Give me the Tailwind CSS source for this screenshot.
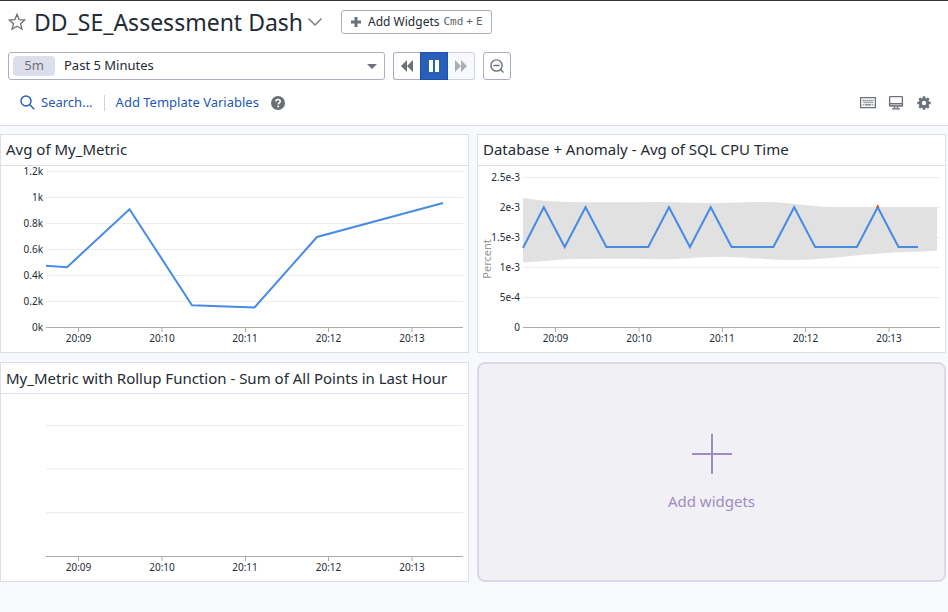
<!DOCTYPE html>
<html lang="en">
<head>
<meta charset="utf-8">
<meta name="viewport" content="width=device-width, initial-scale=1">
<title>DD_SE_Assessment Dash</title>
<script src="https://cdn.jsdelivr.net/npm/@tailwindcss/browser@4"></script>
</head>
<body class="min-h-screen bg-[#f8f9fc] font-['Noto_Sans','Open_Sans',sans-serif] text-[#232b35]">
<header class="border-t border-b border-t-[#333] border-b-[#dcdfea] bg-white">
  <div class="flex h-[42px] items-center px-2">
    <button aria-label="Favorite dashboard" class="text-[#6b7178]">
      <svg class="size-[18px]" viewBox="0 0 18 18" fill="none" stroke="currentColor" stroke-width="1.3" stroke-linejoin="miter"><path d="M9 1.3 11.1 6.6 16.8 7 12.5 10.7 13.9 16.2 9 13.2 4.1 16.2 5.5 10.7 1.2 7 6.9 6.6Z"/></svg>
    </button>
    <h1 class="ml-2 text-[23px] leading-8">DD_SE_Assessment Dash</h1>
    <button aria-label="Dashboard menu" class="ml-1 text-[#7b8087]">
      <svg class="h-4 w-4" viewBox="0 0 16 16" fill="none" stroke="currentColor" stroke-width="1.5"><path d="M1.5 4.5 8 11 14.500 4.500"/></svg>
    </button>
    <button class="ml-[18px] flex h-6 items-center rounded-[3px] border border-[#a9afc0] px-2 text-xs">
      <svg class="mr-1.5 size-3 text-[#6b7178]" viewBox="0 0 12 12" fill="none" stroke="currentColor" stroke-width="3"><path d="M6 1v10M1 6h10"/></svg>
      Add Widgets
      <kbd class="ml-1 flex gap-[3px] font-['DejaVu_Sans_Mono',monospace] text-[11px] text-[#5b636e]"><span>Cmd</span> <span>+</span> <span>E</span></kbd>
    </button>
  </div>
  <div class="flex items-center gap-2 px-2 pt-[9px]">
    <div class="relative w-[377px]">
      <select aria-label="Time range" class="block h-7 w-full appearance-none rounded-[3px] border border-[#a9afc0] bg-white pr-7 pl-[55px] text-[13px] text-[#232b35]"><option>Past 5 Minutes</option></select>
      <span class="pointer-events-none absolute top-1 left-[5px] flex h-5 w-[42px] items-center justify-center rounded bg-[#dcdfe9] text-[13px] text-[#6b7178]">5m</span>
      <svg class="pointer-events-none absolute top-3 right-2 h-[5px] w-[10px] text-[#6b7178]" viewBox="0 0 10 5" fill="currentColor"><path d="M0 0h10L5 5Z"/></svg>
    </div>
    <div class="flex h-7 w-[82px]">
      <button aria-label="Rewind" class="flex w-[27px] items-center justify-center rounded-l-[3px] border border-r-0 border-[#a9afc0] text-[#6b7178]">
        <svg class="h-3 w-3" viewBox="0 0 12 12" fill="currentColor"><path d="M6 0v12L0 6ZM12 0v12L6 6Z"/></svg>
      </button>
      <button aria-label="Pause" class="flex w-7 items-center justify-center border border-[#1e4fae] bg-[#2860b8] text-white">
        <svg class="h-3 w-3" viewBox="0 0 12 12" fill="currentColor"><path d="M1 0h4v12H1ZM7 0h4v12H7Z"/></svg>
      </button>
      <button aria-label="Fast forward" disabled class="flex w-[27px] items-center justify-center rounded-r-[3px] border border-l-0 border-[#d0d3de] bg-[#f8f9fc] text-[#abaeb3]">
        <svg class="h-3 w-3" viewBox="0 0 12 12" fill="currentColor"><path d="M0 0v12L6 6ZM6 0v12l6-6Z"/></svg>
      </button>
    </div>
    <button aria-label="Zoom out" class="flex size-7 items-center justify-center rounded-[3px] border border-[#a9afc0] text-[#6b7178]">
      <svg class="size-4" viewBox="0 0 16 16" fill="none" stroke="currentColor" stroke-width="1.4"><circle cx="7.500" cy="7.500" r="5.600"/><path d="M4.500 7.500h6M11.500 11.500l3 3"/></svg>
    </button>
  </div>
  <div class="flex h-[45px] items-center pr-4 pl-5 text-[13px] text-[#2459b8]">
    <button class="flex items-center gap-1.5">
      <svg class="size-[15px]" viewBox="0 0 15 15" fill="none" stroke="currentColor" stroke-width="1.4"><circle cx="6" cy="6" r="5"/><path d="m9.600 9.600 4.600 4.600"/></svg>
      Search...
    </button>
    <span class="mx-[11px] h-4 w-px bg-[#ced2de]"></span>
    <a href="#variables">Add Template Variables</a>
    <button aria-label="Help" class="ml-3 text-[#6b6e73]">
      <svg class="size-[14px]" viewBox="0 0 14 14"><circle cx="7" cy="7" r="7" fill="currentColor"/><path d="M4.900 5.500C4.900 2.700 9.200 2.800 9.200 5.400 9.200 6.900 7.200 6.900 7.200 8.500" fill="none" stroke="#fff" stroke-width="1.600"/><circle cx="7.200" cy="10.500" r="1" fill="#fff"/></svg>
    </button>
    <div class="ml-auto flex items-center gap-3 text-[#6b7178]">
      <button aria-label="Keyboard shortcuts"><svg class="size-4" viewBox="0 0 16 16" fill="none" stroke="currentColor"><path d="M.6 2.600h14.800v10H.6Z" stroke-width="1.300"/><path d="M2.500 5.500h11M3.500 7.500h10" stroke-width="1.300" stroke-dasharray="1.200 .8"/><path d="M2.500 9.800h1.200M4.700 9.800h6.600M12.300 9.800h1.200" stroke-width="1.300"/></svg></button>
      <button aria-label="TV mode"><svg class="size-4" viewBox="0 0 16 16" fill="none" stroke="currentColor" stroke-width="1.300"><path d="M2 9h12v2H2Z" fill="#d5d7da" stroke="none"/><rect x="1.600" y="1.600" width="12.800" height="9.400" rx=".6"/><path d="M2 8.600h12M6.500 11.500v2M9.500 11.500v2M4 13.900h8"/></svg></button>
      <button aria-label="Settings"><svg class="size-4" viewBox="0 0 16 16"><circle cx="8" cy="8" r="3.700" fill="none" stroke="currentColor" stroke-width="3"/><path d="M8 1.300v2.500M8 12.200v2.500M1.300 8h2.500M12.200 8h2.500M3.260 3.260l1.800 1.800M10.940 10.940l1.800 1.800M3.260 12.740l1.800-1.800M10.940 5.060l1.800-1.800" stroke="currentColor" stroke-width="2.600"/></svg></button>
    </div>
  </div>
</header>
<main class="grid grid-cols-2 gap-x-2 gap-y-[9px] pt-2 pr-[2px]">
  <section class="border border-[#dcdfea] bg-white">
    <h2 class="flex h-[31px] items-center border-b border-[#dcdfea] px-[5px] pb-px text-[15px]">Avg of My_Metric</h2>
    <svg class="block h-auto w-full overflow-visible" viewBox="0 0 467 186" role="img" aria-label="Average of My_Metric over time">
      <path d="M45 5.500H462M45 31.500H462M45 57.500H462M45 83.500H462M45 109.500H462M45 135.500H462" stroke="#ebebeb"/>
      <path d="M45 161.500H462M77.500 161v5M161 161v5M244.500 161v5M327.500 161v5M411 161v5" stroke="#a9aaab"/>
      <path d="M45 99.700 66 101.200 128.500 43.200 191 139.300 253.500 141.500 316 71 442 37" fill="none" stroke="#488be4" stroke-width="2"/>
      <g class="text-[10px]" fill="#232b35" text-anchor="end"><text x="42" y="9">1.2k</text><text x="42" y="35">1k</text><text x="42" y="61">0.8k</text><text x="42" y="87">0.6k</text><text x="42" y="113">0.4k</text><text x="42" y="139">0.2k</text><text x="42" y="165">0k</text></g>
      <g class="text-[10px]" fill="#232b35" text-anchor="middle"><text x="77.500" y="176">20:09</text><text x="161" y="176">20:10</text><text x="244" y="176">20:11</text><text x="327.500" y="176">20:12</text><text x="411" y="176">20:13</text></g>
    </svg>
  </section>
  <section class="border border-[#dcdfea] bg-white">
    <h2 class="flex h-[31px] items-center border-b border-[#dcdfea] px-[5px] pb-px text-[15px]">Database + Anomaly - Avg of SQL CPU Time</h2>
    <svg class="block h-auto w-full" viewBox="0 0 467 186" role="img" aria-label="SQL CPU time with anomaly band">
      <path d="M45 11.500H462M45 41.500H462M45 71.500H462M45 101.500H462M45 131.500H462" stroke="#ebebeb"/>
      <path d="M45 32C55 33 63 35 80 35.500C110 37 130 36 162 36.300C190 35.500 205 37 232 37C260 37 275 35.500 295 36.300C315 37 335 41 362 41.300H459V84.500C440 86 420 86 402 87.500C375 89 345 94 315 94C290 94 265 90.500 242 90.700C215 91 200 93.500 182 93.300C150 92.500 110 93 88 93.300C75 94 60 96 45 96.500Z" fill="#e1e1e1"/>
      <path d="M45 161.500H462M77.500 161v5M161 161v5M244.500 161v5M327.500 161v5M411 161v5" stroke="#a9aaab"/>
      <path d="M45 82 65.800 41.200 86.700 81 107.500 41.200 128.400 81H170.200L191 41.200 211.900 81 232.700 41.200 253.600 81H295.400L316.200 41.200 337.100 81H378.900L399.700 41.200 420.500 81H440" fill="none" stroke="#488be4" stroke-width="2"/>
      <path d="M398.900 41.800 399.700 40 400.500 41.800" fill="none" stroke="#c9502e" stroke-width="1.500"/>
      <g class="text-[10px]" fill="#232b35" text-anchor="end"><text x="42" y="15">2.5e-3</text><text x="42" y="45">2e-3</text><text x="42" y="75">1.5e-3</text><text x="42" y="105">1e-3</text><text x="42" y="135">5e-4</text><text x="42" y="165">0</text></g>
      <g class="text-[10px]" fill="#232b35" text-anchor="middle"><text x="77.500" y="176">20:09</text><text x="161" y="176">20:10</text><text x="244" y="176">20:11</text><text x="327.500" y="176">20:12</text><text x="411" y="176">20:13</text></g>
      <text class="text-[11px]" transform="translate(13 93) rotate(-90)" text-anchor="middle" fill="#8f9398">Percent</text>
    </svg>
  </section>
  <section class="border border-[#dcdfea] bg-white">
    <h2 class="flex h-[31px] items-center border-b border-[#dcdfea] px-[5px] text-[15px]">My_Metric with Rollup Function - Sum of All Points in Last Hour</h2>
    <svg class="block h-auto w-full" viewBox="0 0 467 187" role="img" aria-label="My_Metric rollup, no data">
      <path d="M45 31.500H462M45 75H462M45 118.700H462" stroke="#ebebeb"/>
      <path d="M45 162.500H462M77.500 162v5M161 162v5M244.500 162v5M327.500 162v5M411 162v5" stroke="#a9aaab"/>
      <g class="text-[10px]" fill="#232b35" text-anchor="middle"><text x="77.500" y="177">20:09</text><text x="161" y="177">20:10</text><text x="244" y="177">20:11</text><text x="327.500" y="177">20:12</text><text x="411" y="177">20:13</text></g>
    </svg>
  </section>
  <button class="flex flex-col items-center justify-center gap-4 rounded-lg border-2 border-[#dcd7ea] bg-[#f1f0f5] pt-0.5 text-[15px] text-[#a18cc2]">
    <svg class="size-10" viewBox="0 0 40 40" fill="none" stroke="currentColor" stroke-width="2"><path d="M20 0v40M0 20h40"/></svg>
    Add widgets
  </button>
</main>
</body>
</html>
